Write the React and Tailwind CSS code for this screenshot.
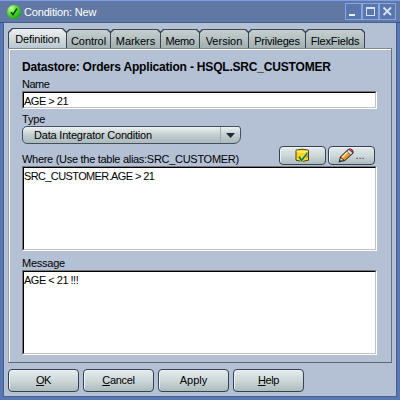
import React from "react";

const TABS = [
  { label: "Control", width: "w-[45px]", spacing: "tracking-[-0.05px]" },
  { label: "Markers", width: "w-[51px]", spacing: "tracking-[-0.05px]" },
  { label: "Memo", width: "w-[40px]", spacing: "tracking-[-0.4px]" },
  { label: "Version", width: "w-[50px]", spacing: "tracking-[0px]" },
  { label: "Privileges", width: "w-[58px]", spacing: "tracking-[-0.2px]" },
  { label: "FlexFields", width: "w-[60px]", spacing: "tracking-[-0.15px]" },
];

function TabShape({ label, width, spacing }) {
  return (
    <div className={`${width} -mr-px h-[19px] shrink-0 bg-[#39454f] p-px pb-0 [clip-path:polygon(0_3px,3px_0,calc(100%-3px)_0,100%_3px,100%_100%,0_100%)]`}>
      <div className={`${spacing} h-full bg-linear-to-b from-[#c6cfd0] to-[#a2b0b2] text-center leading-[22px] whitespace-nowrap [clip-path:polygon(0_3px,3px_0,calc(100%-3px)_0,100%_3px,100%_100%,0_100%)]`}>
        {label}
      </div>
    </div>
  );
}

function Button({ children, className = "" }) {
  return (
    <button className={`flex items-center justify-center rounded-[4px] border border-[#354252] bg-linear-to-b from-[#e5ebec] via-[#cdd8d8] to-[#adbbbd] shadow-[inset_1px_1px_0_#eef2f3] ${className}`}>
      {children}
    </button>
  );
}

function Field({ children, className }) {
  return (
    <div className={`border border-t-[#77787c] border-l-[#77787c] border-r-white border-b-white ${className}`}>
      <div className="h-full border border-t-black border-l-black border-r-[#c2c2c2] border-b-[#c2c2c2] bg-white whitespace-nowrap">
        {children}
      </div>
    </div>
  );
}

function WindowButton({ children }) {
  return (
    <div className="h-[17px] w-[17px] border border-[#86a8e8] bg-[#5b76aa]">
      <svg viewBox="0 0 15 15" className="block h-[15px] w-[15px]" shapeRendering="crispEdges">
        {children}
      </svg>
    </div>
  );
}

export default function App() {
  return (
    <div className="flex h-[400px] w-[400px] flex-col overflow-hidden bg-[#5877b0] font-['Liberation_Sans',Arial,sans-serif] text-[11px] text-black">
      <div className="flex h-[23px] shrink-0 items-start border-t border-b border-t-[#7b9df0] border-b-[#1a55a5] bg-[#6078a3] pr-[4px] pl-[7px]">
        <svg viewBox="0 0 14 14" className="mt-[4px] h-[14px] w-[14px] shrink-0">
          <defs>
            <radialGradient id="green" cx=".3" cy=".25" r=".8">
              <stop offset="0" stopColor="#c5ff9e" />
              <stop offset=".5" stopColor="#52e02c" />
              <stop offset="1" stopColor="#1fa812" />
            </radialGradient>
          </defs>
          <circle cx="7" cy="7" r="6.9" fill="url(#green)" />
          <path d="M4 7.2 6 9.7 9.8 3.6" fill="none" stroke="#083c08" strokeWidth="1.6" />
        </svg>
        <span className="mt-[4px] ml-[3px] leading-[14px] tracking-[-0.17px] whitespace-nowrap text-white">Condition: New</span>
        <div className="mt-[2px] ml-auto flex">
          <WindowButton>
            <path d="M3 10h6v2H3z" fill="#e8f1ff" />
          </WindowButton>
          <WindowButton>
            <path d="M3.5 3.5h8v8h-8zM3 4.5h9" fill="none" stroke="#d4e2fb" />
          </WindowButton>
          <WindowButton>
            <path d="M3.5 3.5 11 11M11 3.5 3.5 11" fill="none" stroke="#d4e4ff" strokeWidth="1.8" shapeRendering="auto" />
          </WindowButton>
        </div>
      </div>

      <div className="mx-[4px] mb-[4px] flex min-h-0 flex-1 flex-col bg-[#b4c1d5] px-[4px] pt-[5px] shadow-[0_0_0_1px_#45608f]">
        <div className="flex h-[20px] shrink-0 items-end">
          <div className="-mr-px h-[20px] w-[59px] shrink-0 bg-[#39454f] p-px pb-0 [clip-path:polygon(0_4px,4px_0,calc(100%-4px)_0,100%_4px,100%_100%,0_100%)]">
            <div className="h-full bg-linear-to-b from-[#eef1f2] via-[#d3dbde] to-[#b9c6cf] text-center leading-[21px] whitespace-nowrap [clip-path:polygon(0_4px,4px_0,calc(100%-4px)_0,100%_4px,100%_100%,0_100%)]">
              <span className="tracking-[-0.15px]">Definition</span>
            </div>
          </div>
          {TABS.map((tab) => (
            <TabShape key={tab.label} {...tab} />
          ))}
        </div>

        <div className="h-[315px] w-[384px] shrink-0 border border-t-[#85898b] border-r-[#69717a] border-b-[#5f6773] border-l-[#98a0a8]">
          <div className="flex h-full flex-col border-t border-l border-white pl-[12px]">
            <div className="mt-[9px] h-[16px] text-[12px] leading-[16px] font-bold tracking-[-0.19px] whitespace-nowrap">
              Datastore: Orders Application - HSQL.SRC_CUSTOMER
            </div>
            <div className="mt-[3px] h-[13px] leading-[13px] tracking-[-0.5px]">Name</div>
            <Field className="h-[18px] w-[355px] shrink-0">
              <span className="block leading-[16px] tracking-[-0.5px]">AGE &gt; 21</span>
            </Field>
            <div className="mt-[4px] h-[13px] leading-[13px] tracking-[-0.2px]">Type</div>
            <div className="flex h-[18px] w-[219px] shrink-0 overflow-hidden rounded-tl-[5px] rounded-tr-[3px] rounded-br-[7px] rounded-bl-[5px] border border-[#454e60] bg-linear-to-b from-[#edf1f2] via-[#c2cecf] to-[#adbabd]">
              <span className="flex-1 pl-[11px] leading-[17px] tracking-[-0.2px]">Data Integrator Condition</span>
              <div className="flex w-[20px] items-center justify-center border-l border-[#9ba8b2]">
                <svg viewBox="0 0 9 5" className="h-[5px] w-[9px]">
                  <path d="M0 0h9L4.5 5z" fill="#20273e" />
                </svg>
              </div>
            </div>
            <div className="mt-[2px] flex h-[20px] w-[353px] shrink-0 items-start">
              <span className="mt-[7px] leading-[13px] tracking-[-0.29px] whitespace-nowrap">Where (Use the table alias:SRC_CUSTOMER)</span>
              <div className="ml-auto flex gap-[2px]">
                <Button className="h-[19px] w-[47px]">
                  <svg viewBox="0 0 15 15" className="h-[15px] w-[15px]">
                    <path d="M1 2.2Q7 .2 13.5 2.2V12.2Q7 14.8 1 12.2z" fill="#ffd514" stroke="#4e4116" strokeWidth="1" />
                    <path d="M1.7 3Q7 5.3 12.8 3" fill="none" stroke="#fff494" strokeWidth="1.3" />
                    <path d="M11 4.5h2v5h-2z" fill="#bd8312" />
                    <path d="M4 8.5 6.5 12.5 12 5.5" fill="none" stroke="#d6e5a8" strokeWidth="3" />
                    <path d="M4 8.5 6.5 12.5 12 5.5" fill="none" stroke="#26792d" strokeWidth="1.8" />
                  </svg>
                </Button>
                <Button className="h-[19px] w-[47px]">
                  <svg viewBox="0 0 16 15" className="h-[15px] w-[16px]">
                    <path d="M.5 14.5 2 8.8 9.8 1.2Q12-.5 14.3 1.5T15 5.8L6.8 13z" fill="#292536" />
                    <path d="M3 9.3 8.7 3.6l3.6 3.3L6.5 12.2z" fill="#e99a20" />
                    <path d="m4 9.4 5.5-5.3" stroke="#ffe2a0" strokeWidth="1.7" />
                    <path d="m9.2 3.3 1.6-1.6 3.6 3.4-1.7 1.6z" fill="#d8e3ed" />
                    <path d="m11 1.5 1.3-.7 2.4 2.2-.2 1.9z" fill="#f03038" />
                    <path d="m2 12.6.9-2.6 2.5 2.2z" fill="#eddab1" />
                  </svg>
                  <span className="ml-[1px] leading-[13px] text-[#333b40]">...</span>
                </Button>
              </div>
            </div>
            <Field className="h-[85px] w-[355px] shrink-0">
              <span className="block leading-[17px] tracking-[-0.62px]">SRC_CUSTOMER.AGE &gt; 21</span>
            </Field>
            <div className="mt-[6px] h-[13px] shrink-0 leading-[13px] tracking-[-0.25px]">Message</div>
            <Field className="h-[85px] w-[355px] shrink-0">
              <span className="block leading-[17px] tracking-[-0.5px]">AGE &lt; 21 !!!</span>
            </Field>
          </div>
        </div>

        <div className="mt-[6px] flex gap-[4px]">
          <Button className="h-[23px] w-[71px]"><span className="tracking-[-0.5px]"><u>O</u>K</span></Button>
          <Button className="h-[23px] w-[71px]"><span className="tracking-[-0.3px]"><u>C</u>ancel</span></Button>
          <Button className="h-[23px] w-[71px]"><span>Apply</span></Button>
          <Button className="h-[23px] w-[71px]"><span className="tracking-[-0.35px]"><u>H</u>elp</span></Button>
        </div>
      </div>
    </div>
  );
}
